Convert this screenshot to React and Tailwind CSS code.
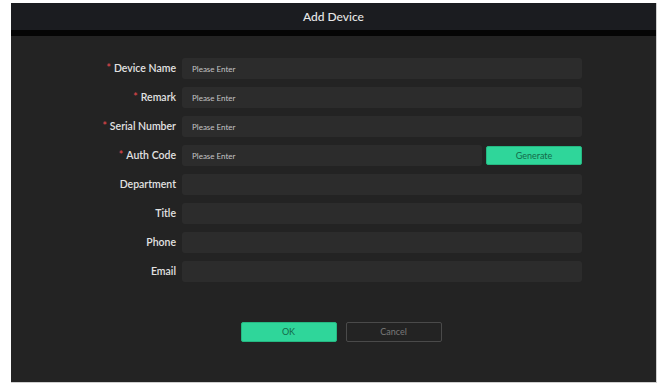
const FIELDS = [
  { label: 'Device Name', required: true, placeholder: 'Please Enter' },
  { label: 'Remark', required: true, placeholder: 'Please Enter' },
  { label: 'Serial Number', required: true, placeholder: 'Please Enter' },
  { label: 'Auth Code', required: true, placeholder: 'Please Enter', generate: true },
  { label: 'Department' },
  { label: 'Title' },
  { label: 'Phone' },
  { label: 'Email' },
]

export default function App() {
  return (
    <div className="w-[665px] h-[392px] bg-white pt-[3px] pl-[11px] font-['Lato','Noto_Sans',sans-serif]">
      <div className="w-[646px] h-[380px] bg-[#232323] flex flex-col border-r border-b border-[#cfcfcf]">
        {/* Header */}
        <div className="h-[27px] bg-[#1b1c20] flex items-center justify-center text-[12px] font-medium text-[#e8e8e8]">
          Add Device
        </div>
        <div className="h-[6px] bg-[#050505]" />

        {/* Form */}
        <div className="flex flex-col gap-[8px] pt-[22px]">
          {FIELDS.map(({ label, required, placeholder, generate }) => (
            <div key={label} className="flex items-center h-[21px]">
              <div className="w-[166px] pr-[1px] text-right text-[10.5px] font-semibold text-[#e2e2e2]">
                {required && <span className="text-[#e0464b] mr-[3px]">*</span>}
                {label}
              </div>
              <div className="ml-[5px] flex gap-[4px] w-[400px]">
                <div className={`h-[21px] bg-[#2c2c2c] rounded-[3px] flex items-center px-[10px] text-[8px] text-[#c4c4c4] ${generate ? 'w-[300px]' : 'w-[400px]'}`}>
                  {placeholder}
                </div>
                {generate && (
                  <button className="w-[96px] h-[19px] mt-[1px] rounded-[2px] bg-[#2fd69a] border border-[#25b882] text-[9px] text-[#146a49]">
                    Generate
                  </button>
                )}
              </div>
            </div>
          ))}
        </div>

        {/* Buttons */}
        <div className="flex justify-center gap-[9px] mt-[40px] pl-[15px]">
          <button className="w-[96px] h-[20px] rounded-[2px] bg-[#2fd69a] border border-[#25b882] text-[9px] text-[#146a49]">
            OK
          </button>
          <button className="w-[96px] h-[20px] rounded-[2px] border border-[#4a4a4a] text-[9px] text-[#7a7a7a]">
            Cancel
          </button>
        </div>
      </div>
    </div>
  )
}
